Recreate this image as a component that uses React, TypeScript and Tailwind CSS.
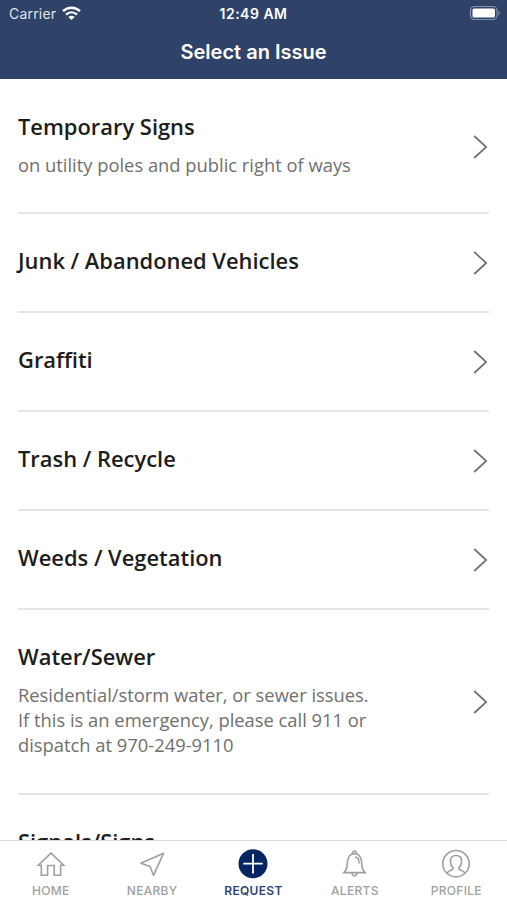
import type { ReactNode } from "react";

interface Issue {
  title: string;
  lines?: string[];
  height: string;
}

interface Tab {
  label: string;
  icon: ReactNode;
  active?: boolean;
}

const issues: Issue[] = [
  { title: "Temporary Signs", lines: ["on utility poles and public right of ways"], height: "h-[134px]" },
  { title: "Junk / Abandoned Vehicles", height: "h-[99px]" },
  { title: "Graffiti", height: "h-[99px]" },
  { title: "Trash / Recycle", height: "h-[99px]" },
  { title: "Weeds / Vegetation", height: "h-[99px]" },
  {
    title: "Water/Sewer",
    lines: [
      "Residential/storm water, or sewer issues.",
      "If this is an emergency, please call 911 or",
      "dispatch at 970-249-9110",
    ],
    height: "h-[185px]",
  },
  { title: "Signals/Signs", height: "h-[135px]" },
];

const strokeProps = {
  width: 30,
  height: 30,
  viewBox: "0 0 30 30",
  fill: "none",
  stroke: "currentColor",
  strokeWidth: 1.6,
};

const tabs: Tab[] = [
  {
    label: "HOME",
    icon: (
      <svg {...strokeProps}>
        <path d="M15 4.2 2.3 16.2h3v10h6.300V16.500h6.600v9.700h6.400v-10h3.100Z" />
      </svg>
    ),
  },
  {
    label: "NEARBY",
    icon: (
      <svg {...strokeProps}>
        <path d="M26.600 4.200 3.800 14.200l9.300 3.300 3.400 8.800Z" strokeLinejoin="round" />
      </svg>
    ),
  },
  {
    label: "REQUEST",
    active: true,
    icon: (
      <svg width="30" height="30" viewBox="0 0 30 30">
        <circle cx="15" cy="14.700" r="14.500" fill="#052562" />
        <path d="M15 5v19.400M5.300 14.700h19.400" stroke="#fff" strokeWidth="1.8" />
      </svg>
    ),
  },
  {
    label: "ALERTS",
    icon: (
      <svg {...strokeProps}>
        <path d="M4 23.600c2.600-2.700 3.100-4.700 3.300-9 .2-6 2.500-10 7.200-10s7 4 7.200 10c.2 4.300.7 6.300 3.300 9Z" />
        <path d="M12.400 4.900c-.3-3.900 4.500-3.900 4.200 0M12 23.600c0 4.400 5 4.400 5 0M14.900 8c3 .1 4.300 2.400 4.200 6.500" />
      </svg>
    ),
  },
  {
    label: "PROFILE",
    icon: (
      <svg {...strokeProps}>
        <circle cx="15" cy="14.700" r="13.200" />
        <path d="M6 24.300c.9-2.300 3-2.800 5.200-3.700 1.100-.5 1.300-1.300.5-2.200-1.700-1.800-2.300-4-2.300-6.300 0-3.400 2.100-5.600 5.600-5.600s5.600 2.200 5.600 5.600c0 2.300-.6 4.500-2.300 6.300-.8.9-.6 1.700.5 2.200 2.200.9 4.300 1.400 5.200 3.700" />
      </svg>
    ),
  },
];

function Chevron() {
  return (
    <svg className="mt-px mr-[1.5px] shrink-0" width="15" height="24" viewBox="0 0 15 24" fill="none" stroke="#707070" strokeWidth="1.7">
      <path d="M1.200 1 13.200 12 1.200 23" />
    </svg>
  );
}

function StatusBar() {
  return (
    <div className="grid h-7 grid-cols-3 items-center px-[9px] text-[14px]">
      <div className="flex items-center gap-[6px] text-[#dfe4ed]">
        <span className="-mt-px tracking-[0.2px]">Carrier</span>
        <svg className="-mt-[2px]" width="19" height="15" viewBox="0 0 19 15" fill="none" stroke="#fff" strokeWidth="2.4">
          <path d="M1 5.200c4.900-4.700 12.100-4.700 17 0M4 8.600c3.300-3 7.700-3 11 0" />
          <path d="M9.500 14 6.300 10.900c1.900-1.600 4.500-1.600 6.400 0Z" fill="#fff" stroke="none" />
        </svg>
      </div>
      <span className="-mt-px text-center font-semibold tracking-[0.5px] whitespace-nowrap">12:49 AM</span>
      <svg className="-mt-[2px] -mr-[3px] justify-self-end" width="32" height="16" viewBox="0 0 32 16">
        <rect x="1.500" y="1.500" width="26.500" height="13" rx="4" fill="none" stroke="#8493ae" strokeWidth="1.2" />
        <rect x="3.500" y="3.500" width="22.500" height="9" rx="1.5" fill="#fff" />
        <path d="M29.300 5.500c2 1 2 4 0 5Z" fill="#8493ae" />
      </svg>
    </div>
  );
}

function IssueRow({ issue }: { issue: Issue }) {
  return (
    <div className={`mx-[18px] flex shrink-0 items-center justify-between border-b-2 border-[#e5e5e5] ${issue.height}`}>
      <div className="self-start pt-[31px]">
        <h2 className="text-[21.9px] leading-[31px] font-semibold whitespace-nowrap text-[#1d1d1d]">{issue.title}</h2>
        {issue.lines && (
          <p className="mt-[10px] text-[18.35px] leading-[25px] whitespace-nowrap text-[#707070]">
            {issue.lines.map((line) => (
              <span key={line} className="block">{line}</span>
            ))}
          </p>
        )}
      </div>
      <Chevron />
    </div>
  );
}

export default function App() {
  return (
    <div className="flex h-[900px] w-[507px] flex-col overflow-hidden bg-white font-['Open_Sans',sans-serif]">
      <header className="h-[79px] shrink-0 bg-[#2f4368] font-['Inter',sans-serif] text-white">
        <StatusBar />
        <h1 className="text-center text-[20px] leading-[49px] font-semibold">Select an Issue</h1>
      </header>

      <main className="flex min-h-0 flex-1 flex-col overflow-hidden pt-px">
        {issues.map((issue) => (
          <IssueRow key={issue.title} issue={issue} />
        ))}
      </main>

      <nav className="grid h-[60px] shrink-0 grid-cols-5 border-t border-[#dcdcdc] font-['Inter',sans-serif]">
        {tabs.map((tab) => (
          <div
            key={tab.label}
            className={`flex flex-col items-center pt-2 ${tab.active ? "font-semibold text-[#2b4478]" : "font-medium text-[#a0a0a0]"}`}
          >
            {tab.icon}
            <span className="mt-1 text-[12px] leading-4 tracking-[0.3px]">{tab.label}</span>
          </div>
        ))}
      </nav>
    </div>
  );
}
